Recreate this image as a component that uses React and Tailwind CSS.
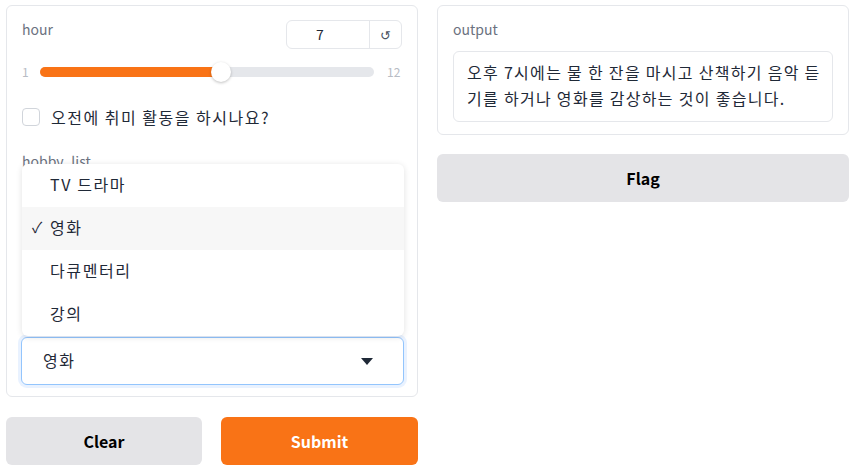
const font = { fontFamily: '"Noto Sans CJK KR", "Noto Sans", sans-serif' };

const options = ['TV 드라마', '영화', '다큐멘터리', '강의'];

const App = () => {
  return (
    <div className="w-[856px] h-[473px] bg-white px-[6px] pt-[5px] flex gap-[19px] text-[#1f2937]" style={font}>
      {/* left column */}
      <div className="w-[412px] flex flex-col">
        <div className="border border-[#e5e7eb] rounded-md h-[392px] px-[15px] pt-[14px] relative">
          <div className="flex items-start justify-between">
            <span className="text-[14px] text-[#6b7280] leading-5 -mt-[1px]">hour</span>
            <div className="flex w-[116px] h-[29px] border border-[#e5e7eb] rounded-md">
              <div className="flex-1 flex items-center justify-center pr-[16px] text-[14px]">7</div>
              <div className="w-[32px] border-l border-[#e5e7eb] flex items-center justify-center text-[13px] text-[#4b5563]">↺</div>
            </div>
          </div>
          <div className="flex items-center mt-[13px] h-[20px]">
            <span className="text-[12px] text-[#b8bcc4] w-[18px]">1</span>
            <div className="relative w-[334px] h-[10px] rounded-full bg-[#e5e7eb]">
              <div className="absolute left-0 top-0 h-[10px] w-[182px] rounded-full bg-[#f97316]" />
              <div className="absolute left-[171px] top-[-5px] w-[20px] h-[20px] rounded-full bg-white shadow-[0_1px_3px_rgba(0,0,0,0.25)]" />
            </div>
            <span className="text-[12px] text-[#b8bcc4] ml-[13px]">12</span>
          </div>
          <div className="flex items-center mt-[23px] gap-[11px]">
            <div className="w-[18px] h-[18px] rounded-[4px] border border-[#d1d5db] bg-white" />
            <span className="text-[16px] text-[#1f2937] tracking-[1.5px]">오전에 취미 활동을 하시나요?</span>
          </div>
          <div className="mt-[22px] text-[14px] text-[#6b7280] leading-5">hobby_list</div>
          <div className="absolute left-[15px] top-[158px] w-[382px] bg-white rounded-md shadow-[0_1px_6px_rgba(0,0,0,0.12)] z-10 overflow-hidden">
            {options.map((o, i) => (
              <div key={o} className={`h-[43px] flex items-center text-[16px] pb-[3px] ${i === 1 ? 'bg-[#f7f7f7]' : ''}`}>
                <span className="w-[28px] pl-[10px] text-[15px]">{i === 1 ? '✓' : ''}</span>
                <span className="tracking-[1.6px]">{o}</span>
              </div>
            ))}
          </div>
          <div className="absolute left-[14px] top-[331px] w-[383px] h-[48px] border border-[#93c5fd] rounded-md bg-white shadow-[0_0_0_3px_rgba(191,219,254,0.35)] flex items-center justify-between pl-[21px] pr-[30px]">
            <span className="text-[16px] tracking-[1.6px] pb-[2px]">영화</span>
            <svg width="12" height="7" viewBox="0 0 12 7"><path d="M0 0h12L6 7z" fill="#1f2937" /></svg>
          </div>
        </div>
        <div className="flex gap-[19px] mt-[20px]">
          <button className="w-[196px] h-[48px] rounded-md bg-[#e4e4e7] text-[16px] font-bold text-black">Clear</button>
          <button className="w-[197px] h-[48px] rounded-md bg-[#f97316] text-[16px] font-bold text-white">Submit</button>
        </div>
      </div>
      {/* right column */}
      <div className="w-[412px] flex flex-col">
        <div className="border border-[#e5e7eb] rounded-md h-[130px] px-[15px] pt-[14px]">
          <div className="text-[14px] text-[#6b7280] leading-5 -mt-[1px]">output</div>
          <div className="mt-[12px] border border-[#e5e7eb] rounded-md h-[71px] px-[13px] pt-[7px] text-[16px] leading-[26px] tracking-[1.3px] text-[#1f2937] whitespace-nowrap">
            오후 7시에는 물 한 잔을 마시고 산책하기 음악 듣<br />기를 하거나 영화를 감상하는 것이 좋습니다.
          </div>
        </div>
        <button className="mt-[19px] h-[48px] rounded-md bg-[#e4e4e7] text-[16px] font-bold text-black">Flag</button>
      </div>
    </div>
  );
};

export default App;
